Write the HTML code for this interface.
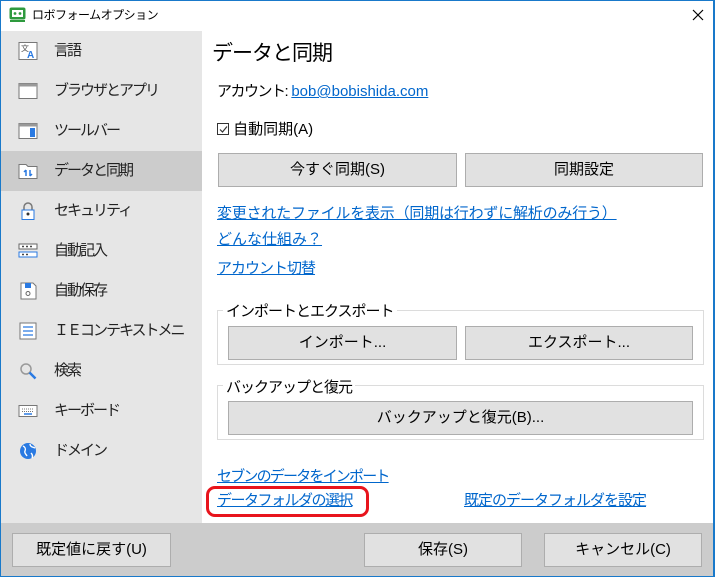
<!DOCTYPE html>
<html><head><meta charset="utf-8"><style>
*{margin:0;padding:0;box-sizing:border-box}
body{width:715px;height:577px;position:relative;overflow:hidden;background:#fff;font-family:"Liberation Sans","Noto Sans CJK JP",sans-serif;font-size:15px;color:#000}
.a{position:absolute}
.win{left:0;top:0;width:715px;height:577px;border:1px solid #1979ca;border-right-width:2px}
.side{left:1px;top:31px;width:201px;height:492px;background:#e6e6e6}
.it{position:absolute;left:1px;width:201px;height:40px;line-height:40px;padding-left:53px;font-size:15px;letter-spacing:-2px;color:#222;overflow:hidden;white-space:nowrap}
.ic{position:absolute;left:17px;top:11px;width:20px;height:18px}
.sel{background:#ccc}
.btn{position:absolute;background:#e1e1e1;border:1px solid #adadad;text-align:center;font-size:15px;color:#000}
.lnk{position:absolute;color:#0066cc;text-decoration:underline;font-size:15px;white-space:nowrap}
.grp{position:absolute;border:1px solid #dcdcdc}
.gl{position:absolute;background:#fff;padding:0 3px;font-size:15px;letter-spacing:-1px}
</style></head><body>
<div class="a win"></div>
<svg class="a" style="left:9px;top:7px" width="17" height="16"><rect x="0.5" y="0.5" width="16" height="12" rx="2" fill="#2e9a3e"/><rect x="3" y="3" width="11" height="7" fill="#fff"/><circle cx="6" cy="6.5" r="1.4" fill="#2e9a3e"/><circle cx="11" cy="6.5" r="1.4" fill="#2e9a3e"/><rect x="1" y="13" width="15" height="2" fill="#2e9a3e"/></svg>
<div class="a" style="left:32px;top:6px;font-size:12px;letter-spacing:-0.5px">ロボフォームオプション</div>
<svg class="a" style="left:692px;top:9px" width="12" height="12"><path d="M1 1L11 11M11 1L1 11" stroke="#000" stroke-width="1.2"/></svg>
<div class="a side"></div>
<div class="it" style="top:31px"><svg class="ic" viewBox="0 0 20 18"><rect x="1" y="0.5" width="18" height="17" fill="#fff" stroke="#777"/><text x="3" y="9" font-size="8" fill="#555">文</text><text x="9" y="16" font-size="10" font-weight="bold" fill="#2a7ae2">A</text></svg>言語</div>
<div class="it" style="top:71px"><svg class="ic" viewBox="0 0 20 18"><rect x="1" y="1.5" width="18" height="15" fill="#fff" stroke="#777"/><rect x="1" y="1.5" width="18" height="3" fill="#999"/></svg>ブラウザとアプリ</div>
<div class="it" style="top:111px"><svg class="ic" viewBox="0 0 20 18"><rect x="1" y="1.5" width="18" height="15" fill="#fff" stroke="#777"/><rect x="1" y="1.5" width="18" height="3" fill="#999"/><rect x="12" y="6" width="5" height="9" fill="#2a7ae2"/></svg>ツールバー</div>
<div class="it sel" style="top:151px"><svg class="ic" viewBox="0 0 20 18"><path d="M1 2.5h7l2 2h9v12H1z" fill="#fff" stroke="#777"/><path d="M8 8v6M6 10l2-2M12 8v6M14 12l-2 2" stroke="#2a7ae2" stroke-width="1.5" fill="none"/></svg>データと同期</div>
<div class="it" style="top:191px"><svg class="ic" viewBox="0 0 20 18"><path d="M6 8V5a4 4 0 0 1 8 0v3" stroke="#777" stroke-width="1.5" fill="none"/><rect x="4" y="8" width="12" height="9.5" fill="#fff" stroke="#2a7ae2"/><circle cx="10" cy="12" r="1.5" fill="#333"/></svg>セキュリティ</div>
<div class="it" style="top:231px"><svg class="ic" viewBox="0 0 20 18"><rect x="1" y="2" width="18" height="5" fill="#fff" stroke="#666"/><rect x="1" y="10" width="18" height="5" fill="#fff" stroke="#2a7ae2"/><path d="M4 4.5h2M8 4.5h2M12 4.5h2M4 12.5h2M8 12.5h2" stroke="#444" stroke-width="1.5"/></svg>自動記入</div>
<div class="it" style="top:271px"><svg class="ic" viewBox="0 0 20 18"><path d="M3 1h12l3 3v13H3z" fill="#fff" stroke="#777"/><rect x="7" y="1" width="6" height="5" fill="#2a7ae2"/><circle cx="10" cy="11.5" r="2" fill="none" stroke="#666"/></svg>自動保存</div>
<div class="it" style="top:311px"><svg class="ic" viewBox="0 0 20 18"><rect x="2" y="1" width="16" height="16" fill="#fff" stroke="#777"/><path d="M5 5h10M5 9h10M5 13h10" stroke="#2a7ae2" stroke-width="1.3"/></svg>ＩＥコンテキストメニ</div>
<div class="it" style="top:351px"><svg class="ic" viewBox="0 0 20 18"><circle cx="8" cy="7" r="5" fill="none" stroke="#999" stroke-width="1.5"/><path d="M11.5 10.5l6 6" stroke="#2a7ae2" stroke-width="2.5"/></svg>検索</div>
<div class="it" style="top:391px"><svg class="ic" viewBox="0 0 20 18"><rect x="1" y="3.5" width="18" height="11" fill="#fff" stroke="#777"/><path d="M4 7h12M4 9.5h12" stroke="#777" stroke-dasharray="1 1"/><path d="M6 12h8" stroke="#2a7ae2" stroke-width="1.5"/></svg>キーボード</div>
<div class="it" style="top:431px"><svg class="ic" viewBox="0 0 20 18"><circle cx="10" cy="9" r="8" fill="#2a7ae2"/><path d="M5 4c2 1 3 3 2 5s1 3 2 5M12 2c0 3 3 3 5 4M13 11c1 1 2 3 1 5" stroke="#fff" stroke-width="1.4" fill="none"/></svg>ドメイン</div>
<div class="a" style="left:212px;top:37px;font-size:21px;letter-spacing:-1px">データと同期</div>
<div class="a" style="left:217px;top:80px"><span style="letter-spacing:-1.5px">アカウント:</span> <span style="color:#0066cc;text-decoration:underline">bob@bobishida.com</span></div>
<div class="a" style="left:217px;top:118px"><span style="display:inline-block;width:12px;height:12px;border:1px solid #333;vertical-align:-1px;position:relative"><svg style="position:absolute;left:1px;top:1px" width="9" height="9"><path d="M1 4.5l2.5 2.5L8 1.5" stroke="#333" fill="none" stroke-width="1.2"/></svg></span> 自動同期(A)</div>
<div class="btn" style="left:218px;top:153px;width:239px;height:34px;line-height:32px">今すぐ同期(S)</div>
<div class="btn" style="left:465px;top:153px;width:238px;height:34px;line-height:32px">同期設定</div>
<div class="lnk" style="left:217px;top:202px;letter-spacing:-0.2px">変更されたファイルを表示（同期は行わずに解析のみ行う）</div>
<div class="lnk" style="left:217px;top:228px">どんな仕組み？</div>
<div class="lnk" style="left:217px;top:257px;letter-spacing:-1px">アカウント切替</div>
<div class="grp" style="left:217px;top:310px;width:487px;height:55px"></div>
<div class="gl" style="left:223px;top:300px">インポートとエクスポート</div>
<div class="btn" style="left:228px;top:326px;width:229px;height:34px;line-height:32px">インポート...</div>
<div class="btn" style="left:465px;top:326px;width:228px;height:34px;line-height:32px">エクスポート...</div>
<div class="grp" style="left:217px;top:385px;width:487px;height:55px"></div>
<div class="gl" style="left:223px;top:376px">バックアップと復元</div>
<div class="btn" style="left:228px;top:401px;width:465px;height:34px;line-height:32px">バックアップと復元(B)...</div>
<div class="lnk" style="left:217px;top:465px;letter-spacing:-1.8px">セブンのデータをインポート</div>
<div class="lnk" style="left:217px;top:489px;letter-spacing:-1.5px">データフォルダの選択</div>
<div class="lnk" style="left:464px;top:489px;letter-spacing:-1px">既定のデータフォルダを設定</div>
<div class="a" style="left:206px;top:486px;width:163px;height:31px;border:3px solid #e8141c;border-radius:9px"></div>
<div class="a" style="left:1px;top:523px;width:712px;height:53px;background:#ccc"></div>
<div class="btn" style="left:12px;top:533px;width:159px;height:34px;line-height:32px">既定値に戻す(U)</div>
<div class="btn" style="left:364px;top:533px;width:158px;height:34px;line-height:32px">保存(S)</div>
<div class="btn" style="left:544px;top:533px;width:158px;height:34px;line-height:32px">キャンセル(C)</div>
</body></html>
